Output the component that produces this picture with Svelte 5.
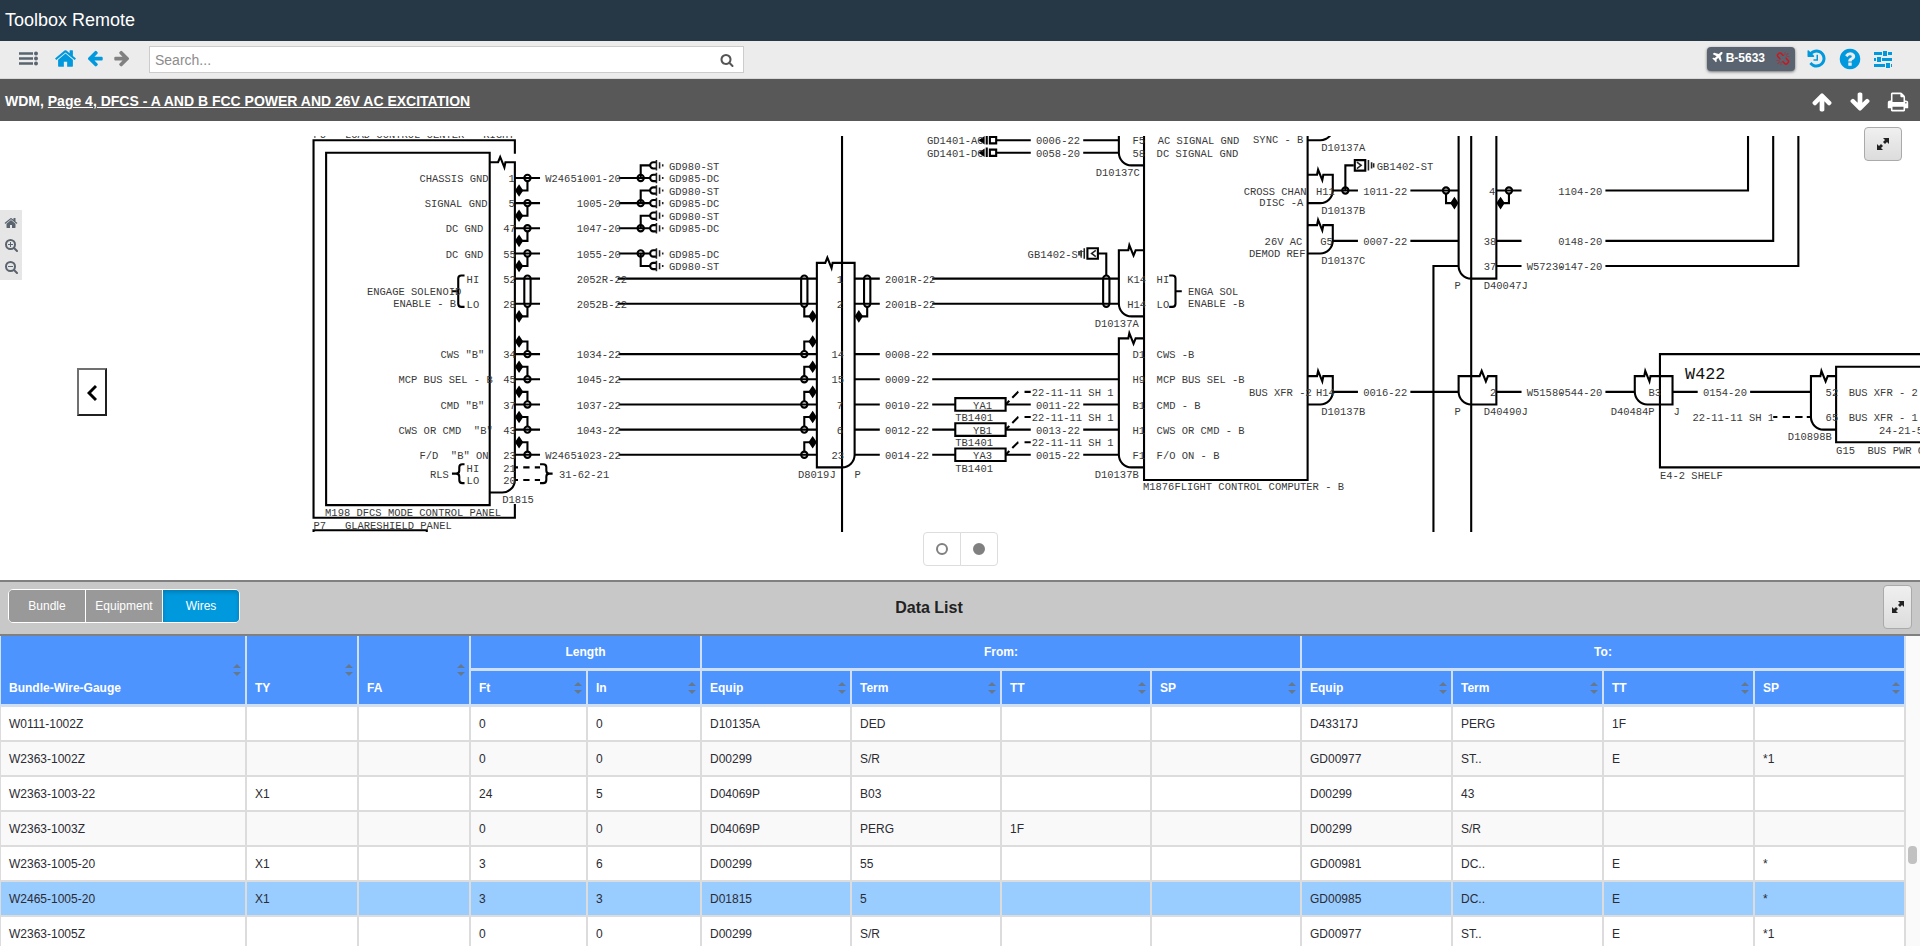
<script>
  const icons = {
    home: 'M1472 992v480q0 26-19 45t-45 19h-384v-384h-256v384h-384q-26 0-45-19t-19-45v-480q0-1 .5-3t.5-3l575-474 575 474q1 2 1 6zm223-69l-62 74q-8 9-21 11h-3q-13 0-21-7l-692-577-692 577q-12 8-24 7-13-2-21-11l-62-74q-8-10-7-23.5t11-21.5l719-599q32-26 76-26t76 26l244 204v-195q0-14 9-23t23-9h192q14 0 23 9t9 23v408l219 182q10 8 11 21.5t-7 23.5z',
    left: 'M1664 896v128q0 53-32.5 90.5t-84.5 37.5h-704l293 294q38 36 38 90t-38 90l-75 76q-37 37-90 37-52 0-91-37l-651-652q-37-37-37-90 0-52 37-91l651-650q38-38 91-38 52 0 90 38l75 74q38 38 38 91t-38 91l-293 293h704q52 0 84.5 37.5t32.5 90.5z',
    right: 'M1600 960q0 54-37 91l-651 651q-39 37-91 37-51 0-90-37l-75-75q-38-38-38-91t38-91l293-293h-704q-52 0-84.5-37.5t-32.5-90.5v-128q0-53 32.5-90.5t84.5-37.5h704l-293-294q-38-36-38-90t38-90l75-75q38-38 90-38 53 0 91 38l651 651q37 35 37 90z',
    up: 'M1675 971q0 51-37 90l-75 75q-38 38-91 38-54 0-90-38l-294-293v704q0 52-37.5 84.5t-90.5 32.5h-128q-53 0-90.5-32.5t-37.5-84.5v-704l-294 293q-36 38-90 38t-90-38l-75-75q-38-38-38-90 0-53 38-91l651-651q35-37 90-37 54 0 91 37l651 651q37 39 37 91z',
    down: 'M1675 832q0 53-37 90l-651 652q-39 37-91 37-53 0-90-37l-651-652q-38-36-38-90 0-53 38-91l74-75q39-37 91-37 53 0 90 37l294 294v-704q0-52 38-90t90-38h128q52 0 90 38t38 90v704l294-294q37-37 90-37 52 0 91 37l75 75q37 39 37 91z',
    search: 'M1216 832q0-185-131.5-316.5t-316.5-131.5-316.5 131.5-131.5 316.5 131.5 316.5 316.5 131.5 316.5-131.5 131.5-316.5zm512 832q0 52-38 90t-90 38q-54 0-90-38l-343-342q-179 124-399 124-143 0-273.5-55.5t-225-150-150-225-55.5-273.5 55.5-273.5 150-225 225-150 273.5-55.5 273.5 55.5 225 150 150 225 55.5 273.5q0 220-124 399l343 343q37 37 37 90z',
    help: 'M1024 1376v-192q0-14-9-23t-23-9h-192q-14 0-23 9t-9 23v192q0 14 9 23t23 9h192q14 0 23-9t9-23zm256-672q0-88-55.5-163t-138.5-116-170-41q-243 0-371 213-15 24 8 42l132 100q7 6 19 6 16 0 25-12 53-68 86-92 34-24 86-24 48 0 85.5 26t37.5 59q0 38-20 61t-68 45q-63 28-115.5 86.5t-52.5 125.5v36q0 14 9 23t23 9h192q14 0 23-9t9-23q0-19 21.5-49.5t54.5-49.5q32-18 49-28.5t46-35 44.5-48 28-60.5 12.5-81zm384 192q0 209-103 385.5t-279.5 279.5-385.5 103-385.5-103-279.5-279.5-103-385.5 103-385.5 279.5-279.5 385.5-103 385.5 103 279.5 279.5 103 385.5z',
    history: 'M1664 896q0 156-61 298t-164 245-245 164-298 61q-172 0-327-72.5t-264-204.5q-7-10-6.5-22.5t8.5-20.5l137-138q10-9 25-9 16 2 23 12 73 95 179 147t225 52q104 0 198.5-40.5t163.5-109.5 109.5-163.5 40.5-198.5-40.5-198.5-109.5-163.5-163.5-109.5-198.5-40.5q-98 0-188 35.5t-160 101.5l137 138q31 30 14 69-17 40-59 40h-448q-26 0-45-19t-19-45v-448q0-42 40-59 39-17 69 14l130 129q107-101 244.5-156.5t284.5-55.5q156 0 298 61t245 164 164 245 61 298zm-640-288v448q0 14-9 23t-23 9h-320q-14 0-23-9t-9-23v-64q0-14 9-23t23-9h224v-352q0-14 9-23t23-9h64q14 0 23 9t9 23z',
    print: 'M448 1536h896v-256h-896v256zm0-640h896v-384h-160q-40 0-68-28t-28-68v-160h-640v640zm1152 64q0-26-19-45t-45-19-45 19-19 45 19 45 45 19 45-19 19-45zm128 0v416q0 13-9.5 22.5t-22.5 9.5h-224v160q0 40-28 68t-68 28h-960q-40 0-68-28t-28-68v-160h-224q-13 0-22.5-9.5t-9.5-22.5v-416q0-79 56.5-135.5t135.5-56.5h64v-544q0-40 28-68t68-28h672q40 0 88 20t76 48l152 152q28 28 48 76t20 88v256h64q79 0 135.5 56.5t56.5 135.5z',
    plane: 'M1568 160q44 52 12 148t-108 172l-161 161 160 696q5 19-12 33l-128 96q-7 6-19 6-4 0-7-1-15-3-21-16l-279-508-259 259 53 194q5 17-8 31l-96 96q-9 9-23 9h-2q-15-2-24-13l-189-252-252-189q-11-7-13-23-1-13 9-25l96-97q9-9 23-9 6 0 8 1l194 53 259-259-508-279q-14-8-17-24-2-16 9-27l128-128q14-13 30-8l665 159 160-160q76-76 172-108t148 12z',
    broken: 'M503 1271l-256 256q-10 9-23 9-12 0-23-9-9-10-9-23t9-23l256-256q10-9 23-9t23 9q9 10 9 23t-9 23zm169 41v320q0 14-9 23t-23 9-23-9-9-23v-320q0-14 9-23t23-9 23 9 9 23zm-224-224q0 14-9 23t-23 9h-320q-14 0-23-9t-9-23 9-23 23-9h320q14 0 23 9t9 23zm1264 128q0 120-85 203l-147 146q-83 83-203 83-121 0-204-85l-334-335q-21-21-42-56l239-18 273 274q28 27 68 27.5t68-26.5l147-146q28-28 28-67 0-40-28-68l-274-275 18-239q35 21 56 42l336 336q84 86 84 204zm-617-724l-239 18-273-274q-28-28-68-28-39 0-68 27l-147 146q-28 28-28 67 0 40 28 68l274 274-18 240q-35-21-56-42l-336-336q-84-86-84-204 0-120 85-203l147-146q83-83 203-83 121 0 204 85l334 335q21 21 42 56zm633 84q0 14-9 23t-23 9h-320q-14 0-23-9t-9-23 9-23 23-9h320q14 0 23 9t9 23zm-544-544v320q0 14-9 23t-23 9-23-9-9-23v-320q0-14 9-23t23-9 23 9 9 23zm407 151l-256 256q-11 9-23 9t-23-9q-9-10-9-23t9-23l256-256q10-9 23-9t23 9q9 10 9 23t-9 23z',
  };

  // Drawing units: pins sit on a 12-unit grid, text advances 6 units per character.
  const labels = [
    ['P6   LOAD CONTROL CENTER - RIGHT', 300, 1],
    ['CHASSIS GND', 401, 43], ['SIGNAL GND', 406, 67], ['DC GND', 426, 91], ['DC GND', 426, 115],
    ['HI', 446, 139], ['ENGAGE SOLENOID', 351, 151], ['ENABLE - B', 376, 162], ['LO', 446, 163],
    ['CWS "B"', 421, 211], ['MCP BUS SEL - B', 381, 235], ['CMD "B"', 421, 259],
    ['CWS OR CMD  "B"', 381, 283], ['F/D  "B" ON', 401, 307],
    ['RLS', 411, 325], ['HI', 446, 319], ['LO', 446, 331],
    ['1', 486, 43], ['5', 486, 67], ['47', 481, 91], ['55', 481, 115], ['52', 481, 139], ['28', 481, 163],
    ['34', 481, 211], ['45', 481, 235], ['37', 481, 259], ['43', 481, 283], ['23', 481, 307],
    ['21', 481, 319], ['20', 481, 331], ['D1815', 480, 349],
    ['M198 DFCS MODE CONTROL PANEL', 311, 361], ['P7   GLARESHIELD PANEL', 300, 374],
    ['W2465-', 521, 43], ['1001-20', 551, 43], ['1005-20', 551, 67], ['1047-20', 551, 91], ['1055-20', 551, 115],
    ['2052R-22', 551, 139], ['2052B-22', 551, 163],
    ['1034-22', 551, 211], ['1045-22', 551, 235], ['1037-22', 551, 259], ['1043-22', 551, 283],
    ['W2465-', 521, 307], ['1023-22', 551, 307], ['31-62-21', 534, 325],
    ['GD980-ST', 639, 31], ['GD985-DC', 639, 43], ['GD980-ST', 639, 55], ['GD985-DC', 639, 67],
    ['GD980-ST', 639, 79], ['GD985-DC', 639, 91], ['GD985-DC', 639, 115], ['GD980-ST', 639, 127],
    ['1', 799, 139], ['2', 799, 163], ['14', 794, 211], ['15', 794, 235], ['7', 799, 259], ['6', 799, 283], ['23', 794, 307],
    ['D8019J', 762, 325], ['P', 816, 325],
    ['2001R-22', 845, 139], ['2001B-22', 845, 163], ['0008-22', 845, 211], ['0009-22', 845, 235],
    ['0010-22', 845, 259], ['0012-22', 845, 283], ['0014-22', 845, 307],
    ['YA1', 929, 259], ['YB1', 929, 283], ['YA3', 929, 307],
    ['TB1401', 912, 271], ['TB1401', 912, 295], ['TB1401', 912, 319],
    ['22-11-11 SH 1', 985, 247], ['22-11-11 SH 1', 985, 271], ['22-11-11 SH 1', 985, 295],
    ['0011-22', 989, 259], ['0013-22', 989, 283], ['0015-22', 989, 307],
    ['GD1401-AC', 885, 7], ['GD1401-DC', 885, 19], ['0006-22', 989, 7], ['0058-20', 989, 19], ['GB1402-ST', 981, 115],
    ['F5', 1081, 7], ['58', 1081, 19], ['D10137C', 1046, 37], ['K14', 1076, 139], ['H14', 1076, 163], ['D10137A', 1045, 181],
    ['D1', 1081, 211], ['H9', 1081, 235], ['B1', 1081, 259], ['H1', 1081, 283], ['F1', 1081, 307], ['D10137B', 1045, 325],
    ['AC SIGNAL GND', 1105, 7], ['DC SIGNAL GND', 1104, 19], ['SYNC - B', 1196, 6],
    ['HI', 1104, 139], ['LO', 1104, 163], ['ENGA SOL', 1134, 151], ['ENABLE -B', 1134, 162],
    ['CWS -B', 1104, 211], ['MCP BUS SEL -B', 1104, 235], ['CMD - B', 1104, 259], ['CWS OR CMD - B', 1104, 283], ['F/O ON - B', 1104, 307],
    ['CROSS CHAN', 1187, 55], ['DISC -A', 1202, 66], ['26V AC', 1207, 103], ['DEMOD REF', 1192, 114], ['BUS XFR -2', 1192, 247],
    ['M1876FLIGHT CONTROL COMPUTER - B', 1091, 337],
    ['D10137A', 1261, 13], ['H11', 1256, 55], ['D10137B', 1261, 73], ['G5', 1260, 103], ['D10137C', 1261, 121], ['H14', 1256, 247], ['D10137B', 1261, 265],
    ['GB1402-ST', 1314, 31], ['1011-22', 1301, 55], ['0007-22', 1301, 103], ['0016-22', 1301, 247],
    ['4', 1421, 55], ['38', 1416, 103], ['37', 1416, 127], ['P', 1388, 145], ['D40047J', 1416, 145],
    ['2', 1422, 247], ['P', 1388, 265], ['D40490J', 1416, 265],
    ['1104-20', 1487, 55], ['0148-20', 1487, 103], ['W5723-', 1457, 127], ['0147-20', 1487, 127],
    ['W5158-', 1457, 247], ['0544-20', 1487, 247], ['B3', 1573, 247], ['D40484P', 1537, 265], ['J', 1597, 265],
    ['0154-20', 1625, 247], ['22-11-11 SH 1', 1615, 271], ['52', 1742, 247], ['65', 1742, 271], ['D10898B', 1706, 289],
    ['BUS XFR - 2', 1764, 247], ['BUS XFR - 1', 1764, 271], ['24-21-51', 1793, 283],
    ['G15  BUS PWR CONT', 1752, 302], ['E4-2 SHELF', 1584, 326],
  ];

  const lines = [
    // mode control panel
    'M492 17V4H300V364H492V351', 'M312 16H468V352H312Z', 'M300 378V376H408V378',
    'M468 25H476L478 20L482 30L483 25H492V328a12 12 0 0 1-12 12H468',
    // D8019
    'M804 0V378', 'M780 121H788L790 116L794 126L795 121H816V304a12 12 0 0 1-12 12H780Z',
    // flight control computer
    'M1092 0V328H1248V0', 'M1068 0V16a12 12 0 0 0 12 12H1092',
    'M1092 109H1084L1082 114L1078 104L1077 109H1068V160a12 12 0 0 0 12 12H1092',
    'M1092 193H1084L1082 198L1078 188L1077 193H1068V304a12 12 0 0 0 12 12H1092',
    'M1248 4H1260q6 0 10-5',
    'M1248 37H1257L1258 32L1262 42L1263 37H1272V52a12 12 0 0 1-12 12H1248',
    'M1248 85H1257L1258 80L1262 90L1263 85H1272V100a12 12 0 0 1-12 12H1248',
    'M1248 229H1257L1258 224L1262 234L1263 229H1272V244a12 12 0 0 1-12 12H1248',
    // D40047 and D40490
    'M1404 0V378', 'M1392 0V124a12 12 0 0 0 12 12H1428V0', 'M1392 124H1368V378',
    'M1392 229H1412L1414 224L1418 234L1420 229H1428V256H1404a12 12 0 0 1-12-12Z',
    // shelf
    'M1840 208H1584V316H1840', 'M1560 229H1569L1570 224L1574 234L1575 229H1596V256H1572a12 12 0 0 1-12-12Z',
    'M1752 229H1744L1742 234L1738 224L1737 229H1728V268a12 12 0 0 0 12 12H1752', 'M1840 220H1752V292H1840',
    // braces
    'M444 133h-3q-3 0-3 3v24q0 3 3 3h3M438 148h-6',
    'M444 313h-2q-3 0-3 3v3q0 3-3 3h-4h4q3 0 3 3v3q0 3 3 3h2',
    'M516 313h3q3 0 3 3v3q0 3 3 3h3h-3q-3 0-3 3v3q0 3-3 3h-3',
    'M1116 133h3q3 0 3 3v24q0 3-3 3h-3M1122 148h6',
    // single wires
    'M951 4H984M1034 4H1068M951 16H984M1034 16H1068', 'M1048 112H1056V133',
    'M1272 52H1296M1284 52V28H1292M1346 52H1392M1380 55V64H1388M1428 52H1452M1440 55V64H1432',
    'M1532 52H1668V0M1272 100H1296M1346 100H1392M1428 100H1452M1532 100H1692V0',
    'M1428 124H1452M1532 124H1716V0', 'M1272 244H1296M1346 244H1392M1428 244H1452M1532 244H1560M1596 244H1620M1670 244H1728',
  ];
  const grounds = [[40, -12], [64, -12], [88, -12], [112, 12]];
  const pairRows = [136, 160];
  const busRows = [208, 232, 256, 280, 304];
  const splices = [256, 280, 304];
  const ovals = [[504, 496], [768, 776], [828, 820], [1056, 0]];
  const rings = [[1284, 52], [1380, 52], [1440, 52]];

  const diamond = (x, y) => `M${x} ${y - 6}l4 6l-4 6l-4-6z`;

  const tabs = ['Bundle', 'Equipment', 'Wires'];
  let tab = $state('Wires');
  let page = $state(1);
  let query = $state('');

  const columnWidths = [247, 112, 112, 117, 114, 150, 150, 150, 150, 151, 151, 151, 151];
  const subHeads = ['Ft', 'In', 'Equip', 'Term', 'TT', 'SP', 'Equip', 'Term', 'TT', 'SP'];
  const rows = [
    ['W0111-1002Z', '', '', '0', '0', 'D10135A', 'DED', '', '', 'D43317J', 'PERG', '1F', ''],
    ['W2363-1002Z', '', '', '0', '0', 'D00299', 'S/R', '', '', 'GD00977', 'ST..', 'E', '*1'],
    ['W2363-1003-22', 'X1', '', '24', '5', 'D04069P', 'B03', '', '', 'D00299', '43', '', ''],
    ['W2363-1003Z', '', '', '0', '0', 'D04069P', 'PERG', '1F', '', 'D00299', 'S/R', '', ''],
    ['W2363-1005-20', 'X1', '', '3', '6', 'D00299', '55', '', '', 'GD00981', 'DC..', 'E', '*'],
    ['W2465-1005-20', 'X1', '', '3', '3', 'D01815', '5', '', '', 'GD00985', 'DC..', 'E', '*'],
    ['W2363-1005Z', '', '', '0', '0', 'D00299', 'S/R', '', '', 'GD00977', 'ST..', 'E', '*1'],
  ];
  let selected = $state(5);
</script>

{#snippet icon(name, size)}
  <svg width={size} height={size} viewBox="0 0 1792 1792" fill="currentColor" aria-hidden="true"><path d={icons[name]} /></svg>
{/snippet}

{#snippet expand()}
  <svg width="14" height="14" viewBox="0 0 14 14" fill="currentColor" aria-hidden="true">
    <path d="M7 1h6v6l-2-2-2 2-2-2 2-2zM1 7v6h6l-2-2 2-2-2-2-2 2z" />
  </svg>
{/snippet}

{#snippet sorter()}
  <span class="sorter"><i class="asc"></i><i class="desc"></i></span>
{/snippet}

<div class="app">
  <header class="brand">Toolbox Remote</header>

  <nav class="toolbar">
    <button class="plain menu" aria-label="Menu">
      <svg width="20" height="15" viewBox="0 0 20 15" aria-hidden="true">
        <path d="M0 2.5h14M0 7.5h14M0 12.5h14" stroke="currentColor" stroke-width="2.6" />
        <g fill="currentColor"><circle cx="17" cy="2.5" r="2" /><circle cx="17" cy="7.5" r="2" /><circle cx="17" cy="12.5" r="2" /></g>
      </svg>
    </button>
    <button class="plain blue" aria-label="Home">{@render icon('home', 23)}</button>
    <button class="plain blue" aria-label="Back">{@render icon('left', 18)}</button>
    <button class="plain grey" aria-label="Forward">{@render icon('right', 18)}</button>
    <form class="search" onsubmit={(e) => e.preventDefault()}>
      <input type="text" placeholder="Search..." aria-label="Search" bind:value={query} />
      <button class="plain" aria-label="Run search">{@render icon('search', 14)}</button>
    </form>
    <div class="tools">
      <button class="badge">
        {@render icon('plane', 13)}
        <span>B-5633</span>
        <span class="broken">{@render icon('broken', 14)}</span>
      </button>
      <button class="plain blue" aria-label="History">{@render icon('history', 21)}</button>
      <button class="plain blue" aria-label="Help">{@render icon('help', 24)}</button>
      <button class="plain blue" aria-label="Settings">
        <svg width="20" height="20" viewBox="0 0 20 20" fill="currentColor" aria-hidden="true">
          <path d="M1 3h8v3H1zM15 3h4v3h-4zM10 2h4v5h-4zM1 9h2v3H1zM9 9h10v3H9zM4 8h4v5H4zM1 15h11v3H1zM18 15h1v3h-1zM13 14h4v5h-4z" />
        </svg>
      </button>
    </div>
  </nav>

  <div class="crumb">
    <h1>WDM, <a href="#page-4">Page 4, DFCS - A AND B FCC POWER AND 26V AC EXCITATION</a></h1>
    <div class="crumb-actions">
      <button class="plain" aria-label="Previous match">{@render icon('up', 22)}</button>
      <button class="plain" aria-label="Next match">{@render icon('down', 22)}</button>
      <button class="plain" aria-label="Print">{@render icon('print', 22)}</button>
    </div>
  </div>

  <section class="viewer" aria-label="Wiring diagram">
    <svg class="drawing" viewBox="1 0 1831 378" preserveAspectRatio="xMidYMin slice" role="img" aria-label="Wiring diagram">
      <g class="ink">
        {#each lines as d}<path {d} />{/each}

        {#each grounds as [y, dy]}
          <path d="M492 {y}H516M504 {y + 3}V{y + 12}H496M591 {y}H621M612 {y}V{y + dy}H621" />
          <circle cx="504" cy={y} r="3" /><circle cx="612" cy={y} r="3" />
          <path class="solid" d={diamond(496, y + 12)} />
          {#each [y, y + dy] as sy}
            <path d="M627 {sy - 3}h-3a3 3 0 0 0 0 6h3" />
            <path class="bar" d="M627 {sy - 5}v10M630 {sy - 3}v6M633 {sy - 1}v2" />
          {/each}
        {/each}

        {#each pairRows as y}
          <path d="M492 {y}H516M590 {y}H780M816 {y}H840M890 {y}H1068" />
        {/each}
        {#each ovals as [x, tip]}
          <rect x={x - 3} y="133" width="6" height="30" rx="3" />
          {#if tip}
            <path d="M{x} 163V172H{tip}" /><path class="solid" d={diamond(tip, 172)} />
          {/if}
        {/each}

        {#each busRows as y}
          <path d="M492 {y}H516M591 {y}H780M816 {y}H840M504 {y - 3}V{y - 12}H496M768 {y - 3}V{y - 12}H776" />
          <circle cx="504" cy={y} r="3" /><circle cx="768" cy={y} r="3" />
          <path class="solid" d={diamond(496, y - 12) + diamond(776, y - 12)} />
        {/each}
        <path d="M890 208H1068M890 232H1068" />
        {#each splices as y}
          <path d="M890 {y}H912V{y - 6}H960V{y + 6}H912V{y}M960 {y}H984M1034 {y}H1068" />
          <path stroke-dasharray="5 4 8 6 6 9" d="M960 {y}L972 {y - 12}H984" />
        {/each}

        {#each rings as [x, y]}<circle cx={x} cy={y} r="3" />{/each}
        <path class="solid" d={diamond(1388, 64) + diamond(1432, 64)} />
        <path stroke-dasharray="3 5 6 5 5" d="M492 316H516" />
        <path stroke-dasharray="3 5 6 5 5" d="M492 328H516" />
        <path stroke-dasharray="4 5 7 5 7 4 4" d="M1692 268H1728" />

        {#each [4, 16] as y}
          <path d="M945 {y - 3}h6v6h-6zM942 {y - 5}v9" />
          <path class="solid" d="M934 {y}l6-4v8z" />
        {/each}
        <path d="M1038 107h10v10h-10z" /><path class="bar" d="M1046 109l-4 3l4 3M1035 107v10M1032 109v6M1030 110v4" />
        <path d="M1293 23h10v10h-10z" /><path class="bar" d="M1295 25l4 3l-4 3M1306 23v10M1309 25v6M1311 26v4" />
      </g>
      <g class="lettering" transform="translate(0 1)">
        {#each labels as [text, x, y]}<text {x} {y}>{text}</text>{/each}
        <text class="large" x="1608" y="231">W422</text>
      </g>
    </svg>

    <div class="pager">
      {#each [0, 1] as n}
        <button aria-label="Sheet {n + 1}" onclick={() => (page = n)}><span class="dot" class:on={page === n}></span></button>
      {/each}
    </div>

    <div class="zoom-tools">
      <button class="plain" aria-label="Reset view">{@render icon('home', 14)}</button>
      {#each ['in', 'out'] as mode}
        <button class="plain" aria-label="Zoom {mode}">
          <svg width="13" height="13" viewBox="0 0 13 13" fill="none" stroke="currentColor" stroke-width="2" aria-hidden="true">
            <circle cx="5.5" cy="5.5" r="4.5" /><path d="M9 9l3 3" stroke-linecap="round" />
            <path stroke-width="1" d={mode === 'in' ? 'M3 5.5h5M5.5 3v5' : 'M3 5.5h5'} />
          </svg>
        </button>
      {/each}
    </div>

    <button class="previous" aria-label="Previous sheet">
      <svg width="10" height="18" viewBox="0 0 10 18" fill="none" stroke="#000" stroke-width="3" aria-hidden="true"><path d="M9 2L2 9l7 7" /></svg>
    </button>
    <button class="expand over" aria-label="Expand diagram">{@render expand()}</button>
  </section>

  <section class="list-bar">
    <div class="tabs">
      {#each tabs as name}
        <button class:active={tab === name} onclick={() => (tab = name)}>{name}</button>
      {/each}
    </div>
    <h2>Data List</h2>
    <button class="expand tall" aria-label="Expand data list">{@render expand()}</button>
  </section>

  <section class="data">
    <table>
      <colgroup>{#each columnWidths as w}<col style="width: {w}px" />{/each}</colgroup>
      <thead>
        <tr>
          <th rowspan="2">Bundle-Wire-Gauge{@render sorter()}</th>
          <th rowspan="2">TY{@render sorter()}</th>
          <th rowspan="2">FA{@render sorter()}</th>
          <th class="group" colspan="2">Length</th>
          <th class="group" colspan="4">From:</th>
          <th class="group" colspan="4">To:</th>
        </tr>
        <tr>
          {#each subHeads as head}<th>{head}{@render sorter()}</th>{/each}
        </tr>
      </thead>
      <tbody>
        {#each rows as row, i}
          <tr class:selected={selected === i} onclick={() => (selected = i)}>
            {#each row as cell}<td>{cell}</td>{/each}
          </tr>
        {/each}
      </tbody>
    </table>
    <div class="track"><div class="thumb"></div></div>
  </section>
</div>

<style>
  :global(body) { margin: 0; }
  .app { display: flex; flex-direction: column; height: 100vh; overflow: hidden; background: #fff; color: #222; font: 12px/16px "Liberation Sans", Arial, sans-serif; }
  button, input { font: inherit; }
  button { cursor: pointer; }
  svg { display: block; flex: none; }
  .plain { display: flex; align-items: center; justify-content: center; padding: 0; border: 0; background: none; color: inherit; }
  .blue { color: #0099de; }
  .grey { color: #808080; }

  .brand { flex: none; padding-left: 5px; background: #263746; color: #fff; font-size: 18px; line-height: 41px; }

  .toolbar { flex: none; display: flex; align-items: center; gap: 9px; height: 37px; padding: 0 27px 0 19px; border-bottom: 1px solid #d8d8d8; background: #ececec; }
  .menu { margin-right: 6px; color: #5a646e; }
  .toolbar > .plain { padding-bottom: 3px; }
  .search { flex: 0 1 595px; box-sizing: border-box; display: flex; align-items: center; height: 27px; margin-left: 9px; padding-right: 9px; border: 1px solid #ccc; background: #fff; color: #555; }
  .search input { flex: 1; min-width: 0; padding: 0 5px; border: 0; outline: 0; background: none; color: #333; font-size: 14px; }
  .search input::placeholder { color: #8c8c8c; opacity: 1; }
  .tools { display: flex; align-items: center; gap: 11px; margin-left: auto; padding-bottom: 2px; }
  .badge { display: flex; align-items: center; gap: 2px; height: 24px; padding: 0 5px 2px 4px; border: 0; border-radius: 4px; background: #5a6470; box-shadow: 0 1px 3px #0008; color: #fff; font-weight: bold; }
  .broken { margin: 3px 0 0 9px; color: #d0141c; }

  .crumb { flex: none; display: flex; align-items: center; justify-content: space-between; height: 42px; padding: 0 11px 0 5px; background: #585858; color: #fff; }
  .crumb h1 { margin: 0; padding-top: 2px; font-size: 14px; line-height: 20px; }
  .crumb a { color: inherit; }
  .crumb-actions { display: flex; gap: 16px; padding-top: 4px; }

  .viewer { flex: none; position: relative; padding: 15px 0 14px; }
  .drawing { width: 100%; height: 396px; }
  .ink { fill: none; stroke: #000; stroke-width: 2; }
  .ink .solid { fill: #000; stroke: none; }
  .ink .bar { stroke: #222; stroke-width: 1.5; }
  .lettering { fill: #3a3a3a; font: 10px "Liberation Mono", "Courier New", monospace; }
  .lettering text { white-space: pre; }
  .lettering .large { fill: #111; font-size: 16px; }
  .pager { display: flex; justify-content: center; }
  .pager button { display: grid; place-items: center; width: 38px; height: 34px; padding: 0; border: 1px solid #ddd; background: #fff; }
  .pager button:first-child { border-radius: 4px 0 0 4px; }
  .pager button + button { margin-left: -1px; border-radius: 0 4px 4px 0; }
  .dot { box-sizing: border-box; width: 12px; height: 12px; border: 2px solid #808080; border-radius: 50%; }
  .dot.on { background: #808080; }
  .zoom-tools { position: absolute; left: 0; top: 89px; display: flex; flex-direction: column; align-items: center; gap: 9px; width: 22px; height: 64px; padding-top: 6px; background: #e6e6e6; color: #5a646e; }
  .previous { position: absolute; left: 77px; top: 247px; display: grid; place-items: center; width: 30px; height: 48px; padding: 2px 0 0; border: 2px solid; border-color: #707070 #202020 #202020 #707070; background: #fff; }
  .expand { display: grid; place-items: center; padding: 0; border: 1px solid #aaa; border-radius: 4px; background: linear-gradient(#f0f0f0, #dcdcdc); color: #222; }
  .over { position: absolute; top: 6px; right: 18px; width: 38px; height: 34px; }

  .list-bar { flex: none; display: grid; grid-template-columns: 240px 1fr 302px; align-items: center; height: 52px; padding: 0 8px; border: solid #808080; border-width: 2px 0; background: #c8c8c8; }
  .tabs { display: flex; box-sizing: border-box; width: 232px; height: 34px; margin-bottom: 4px; border: 1px solid #fff; border-radius: 5px; overflow: hidden; }
  .tabs button { flex: 1 1 0; padding: 0; border: 0; background: #999; color: #fff; }
  .tabs button + button { border-left: 1px solid #fff; }
  .tabs .active { background: #0099de; box-shadow: inset 0 2px 4px #0003; }
  .list-bar h2 { margin: 0; font-size: 16px; line-height: 20px; text-align: center; }
  .tall { justify-self: end; width: 29px; height: 44px; margin-bottom: 2px; }

  .data { flex: 1; min-height: 0; display: flex; overflow: hidden; }
  table { flex: 1; min-width: 0; align-self: flex-start; table-layout: fixed; border-spacing: 0; }
  th, td { box-sizing: border-box; padding: 0 8px; border: solid #dcdcdc; border-width: 0 2px 2px 0; text-align: left; white-space: nowrap; }
  td { height: 35px; color: #2b2b33; }
  th { position: relative; height: 36px; padding-bottom: 8px; border-bottom-width: 3px; border-color: #d0dff2; background: #4d94ff; color: #fff; vertical-align: bottom; }
  .group { height: 35px; text-align: center; }
  tr > td:first-child, thead tr:first-child > th:first-child { border-left-width: 1px; }
  tbody tr:nth-child(even) { background: #f9f9f9; }
  tbody tr.selected { background: #99ccff; }
  .sorter { position: absolute; right: 4px; top: 50%; display: grid; gap: 4px; margin-top: -6px; }
  .sorter i { border: solid transparent; border-width: 0 4px; }
  .sorter .asc { border-bottom: 4px solid #66788c; }
  .sorter .desc { border-top: 4px solid #66788c; }
  .track { flex: none; box-sizing: border-box; width: 14px; padding: 210px 3px 0 2px; background: #fafafa; }
  .thumb { height: 18px; border-radius: 4px; background: #c1c1c1; }
</style>
